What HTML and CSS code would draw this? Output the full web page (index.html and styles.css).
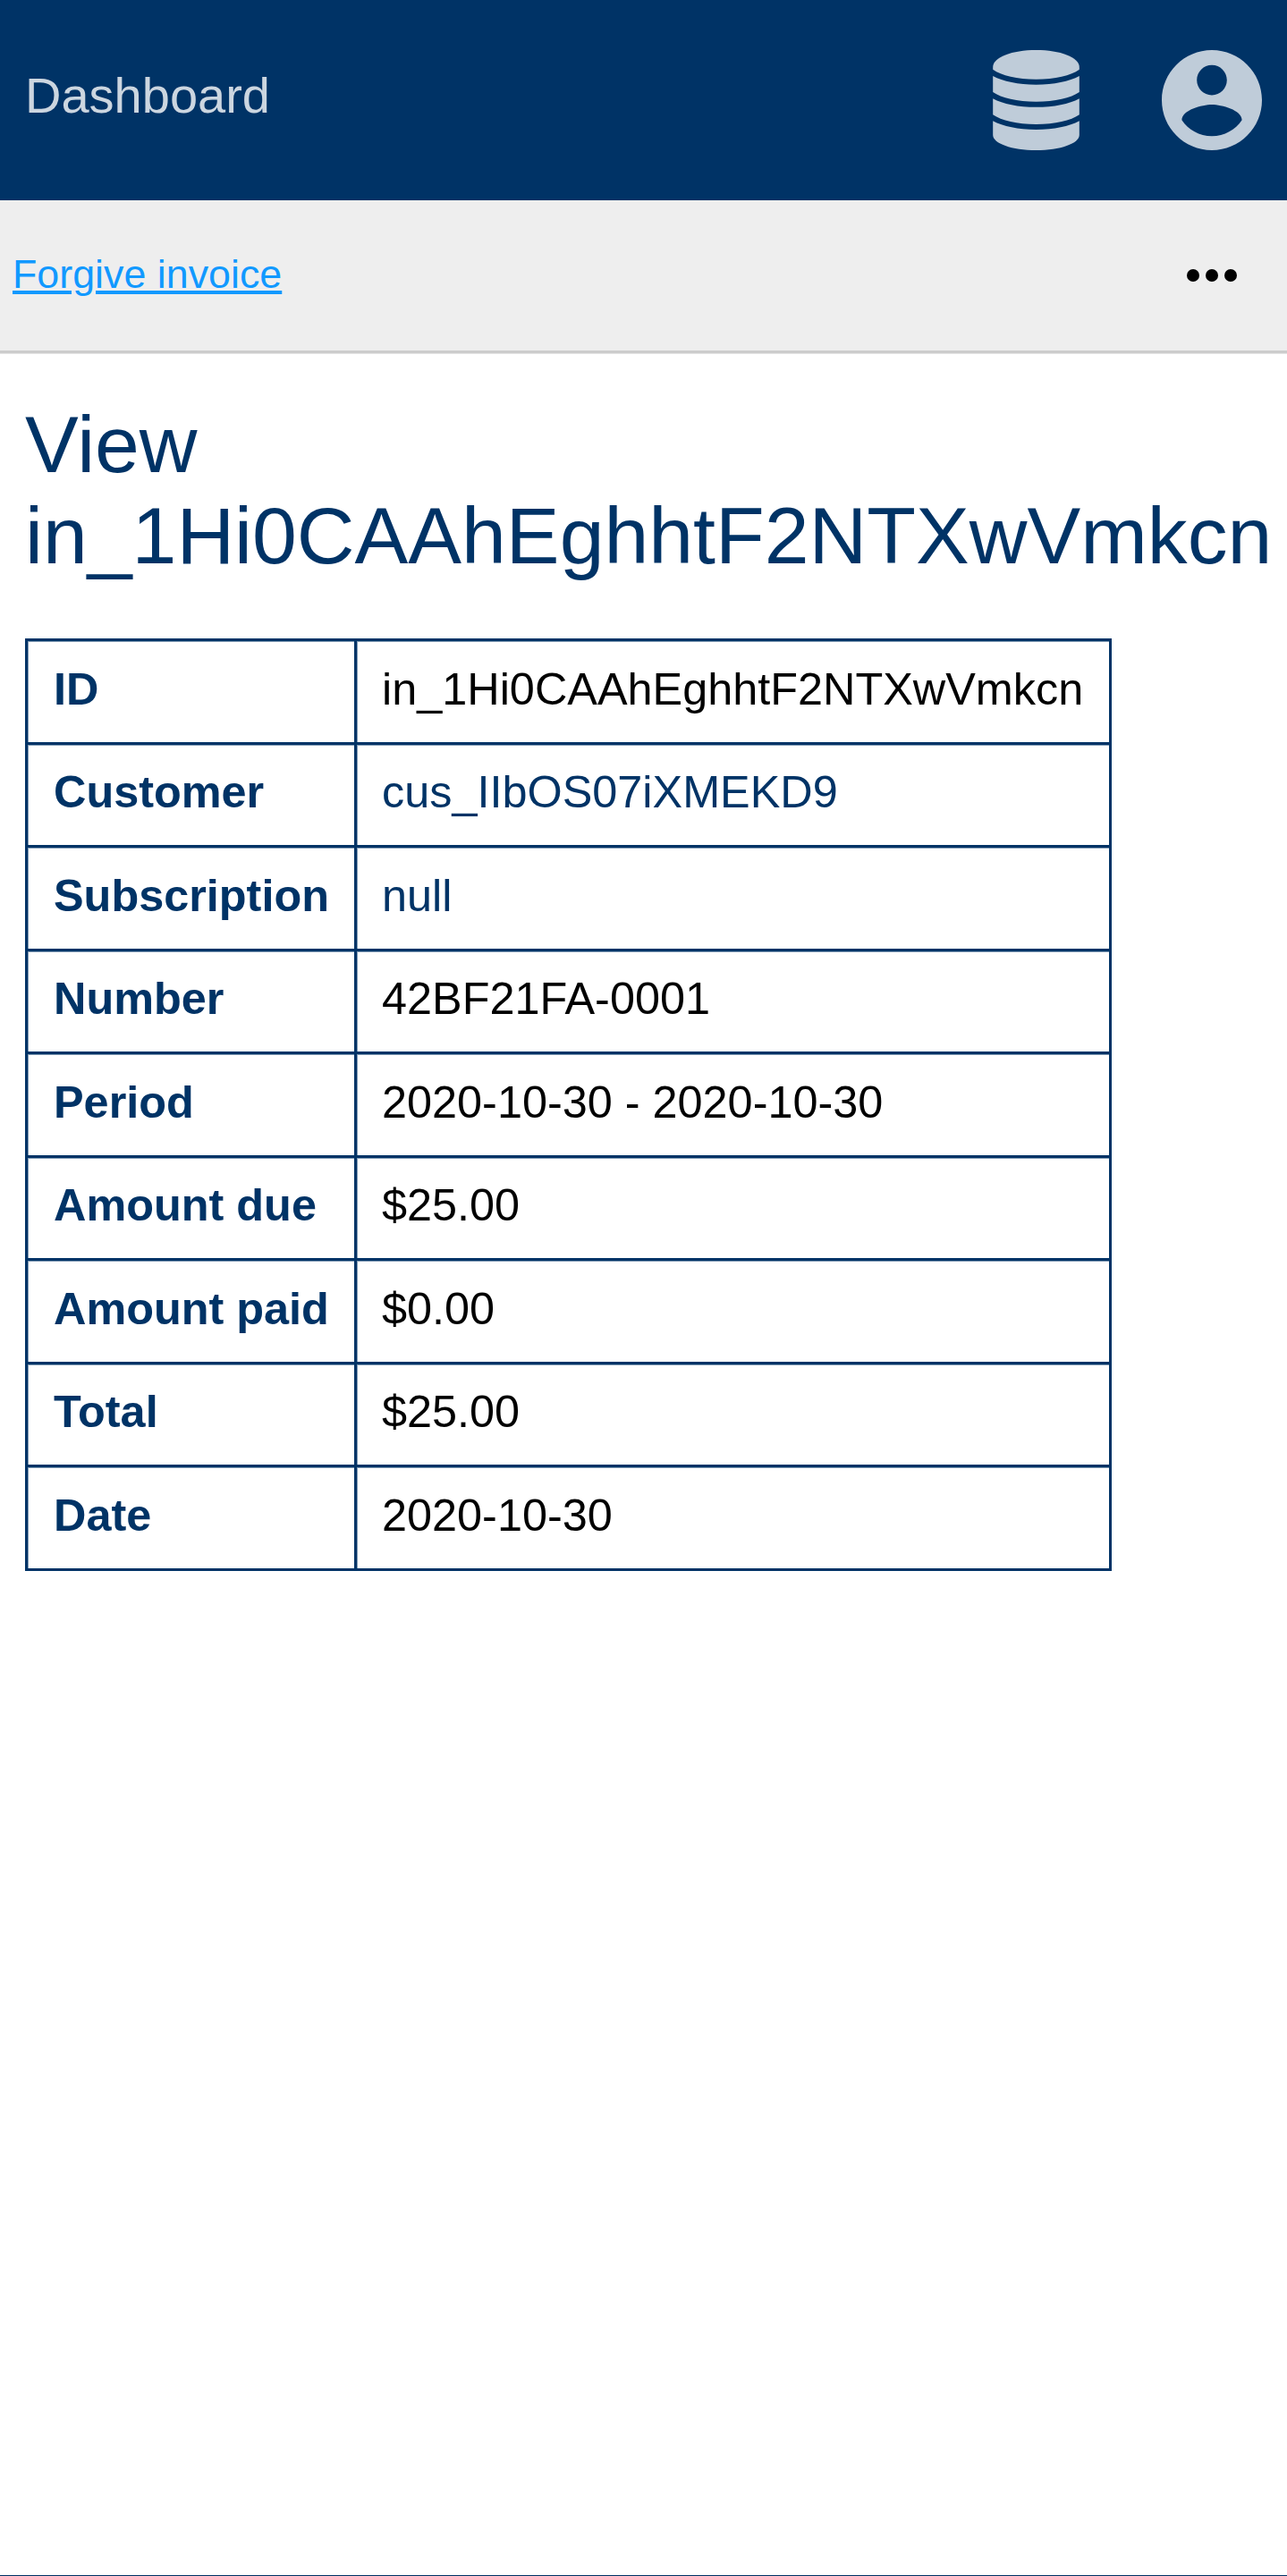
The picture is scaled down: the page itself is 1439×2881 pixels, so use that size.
FILE: index.html
```html
<!DOCTYPE html>
<html lang="en">
<head>
<meta charset="utf-8">
<title>View invoice</title>
<link rel="stylesheet" href="styles.css">
</head>
<body>
<header class="header">
  <a class="brand">Dashboard</a>
  <div class="menus">
    <svg class="icon" viewBox="0 0 112 112" aria-hidden="true">
      <path d="M7.200 19C7.200 8 28.500 0 55.500 0s48.300 8 48.300 19v2.700C94.500 28.500 76.500 32.700 55.500 32.700S16.500 28.500 7.200 21.700z"/>
      <path d="M7.200 29C18.500 35 35.500 38.700 55.500 38.700S92.500 35 103.800 29v18C94.500 53.500 76.500 57.800 55.500 57.800S16.500 53.500 7.200 47z"/>
      <path d="M7.200 54.200C18.500 60.200 35.500 63.800 55.500 63.800S92.500 60.200 103.800 54.200v18C94.500 78.700 76.500 83 55.500 83S16.500 78.700 7.200 72.200z"/>
      <path d="M7.200 79.300C18.500 85.300 35.500 89 55.500 89S92.500 85.300 103.800 79.300V95C103.800 104.500 82.500 112 55.500 112S7.200 104.500 7.200 95z"/>
    </svg>
    <svg class="icon" viewBox="2 2 20 20" aria-hidden="true">
      <path d="M12 2C6.480 2 2 6.480 2 12s4.480 10 10 10 10-4.480 10-10S17.520 2 12 2zm0 3c1.660 0 3 1.340 3 3s-1.340 3-3 3-3-1.340-3-3 1.340-3 3-3zm0 14.200c-2.500 0-4.710-1.280-6-3.220.03-1.990 4-3.080 6-3.080 1.990 0 5.970 1.090 6 3.080-1.290 1.940-3.500 3.220-6 3.220z"/>
    </svg>
  </div>
</header>
<nav class="navbar">
  <a class="nav-link">Forgive invoice</a>
  <svg class="dots" viewBox="0 0 56 14" aria-hidden="true">
    <circle cx="7" cy="7" r="7"/><circle cx="28" cy="7" r="7"/><circle cx="49" cy="7" r="7"/>
  </svg>
</nav>
<main class="content">
  <h1 class="title">View in_1Hi0CAAhEghhtF2NTXwVmkcn</h1>
  <table class="details">
    <tr><th>ID</th><td>in_1Hi0CAAhEghhtF2NTXwVmkcn</td></tr>
    <tr><th>Customer</th><td><a class="link">cus_IIbOS07iXMEKD9</a></td></tr>
    <tr><th>Subscription</th><td><a class="link">null</a></td></tr>
    <tr><th>Number</th><td>42BF21FA-0001</td></tr>
    <tr><th>Period</th><td>2020-10-30 - 2020-10-30</td></tr>
    <tr><th>Amount due</th><td>$25.00</td></tr>
    <tr><th>Amount paid</th><td>$0.00</td></tr>
    <tr><th>Total</th><td>$25.00</td></tr>
    <tr><th>Date</th><td>2020-10-30</td></tr>
  </table>
</main>
</body>
</html>
```
FILE: styles.css
```css
* {
  box-sizing: border-box;
}

body {
  display: flex;
  flex-direction: column;
  height: 2881px;
  margin: 0;
  border-bottom: 1px solid #036;
  background: #fff;
  color: #000;
  font-family: "Liberation Sans", Arial, sans-serif;
}

.header {
  display: flex;
  flex: none;
  align-items: center;
  justify-content: space-between;
  height: 224px;
  padding: 0 28.500px 0 28px;
  background: #036;
}

.brand {
  padding-bottom: 12px;
  color: #ccd6e0;
  font-size: 56px;
  line-height: 63px;
}

.menus {
  display: flex;
  gap: 84px;
}

.icon {
  width: 112px;
  height: 112px;
  fill: #bfccd9;
}

.navbar {
  display: flex;
  flex: none;
  align-items: center;
  justify-content: space-between;
  height: 171px;
  padding: 0 56.500px 0 14px;
  border-bottom: 3px solid #ccc;
  background: #eee;
  box-shadow: 0 1px #e5e5e5;
}

.nav-link {
  padding-bottom: 4px;
  color: #19f;
  font-size: 44.8px;
  line-height: 52px;
  text-decoration: underline;
}

.dots {
  width: 56px;
  height: 14px;
}

.content {
  padding: 52px 28px 0;
}

.title {
  margin: 0 0 64px;
  color: #036;
  font-size: 89.6px;
  font-weight: 400;
  line-height: 101.5px;
}

.details {
  width: 1215px;
  border-collapse: collapse;
  table-layout: fixed;
  font-size: 50.4px;
  line-height: 56px;
}

.details tr {
  height: 115.5px;
}

.details th,
.details td {
  padding: 0 28px 5px;
  border: 3px solid #036;
  box-shadow: inset 1px 1px #8099b3;
  text-align: left;
  white-space: nowrap;
}

.details th {
  width: 368px;
  padding-left: 29px;
  color: #036;
}

.link {
  color: #036;
}
```
